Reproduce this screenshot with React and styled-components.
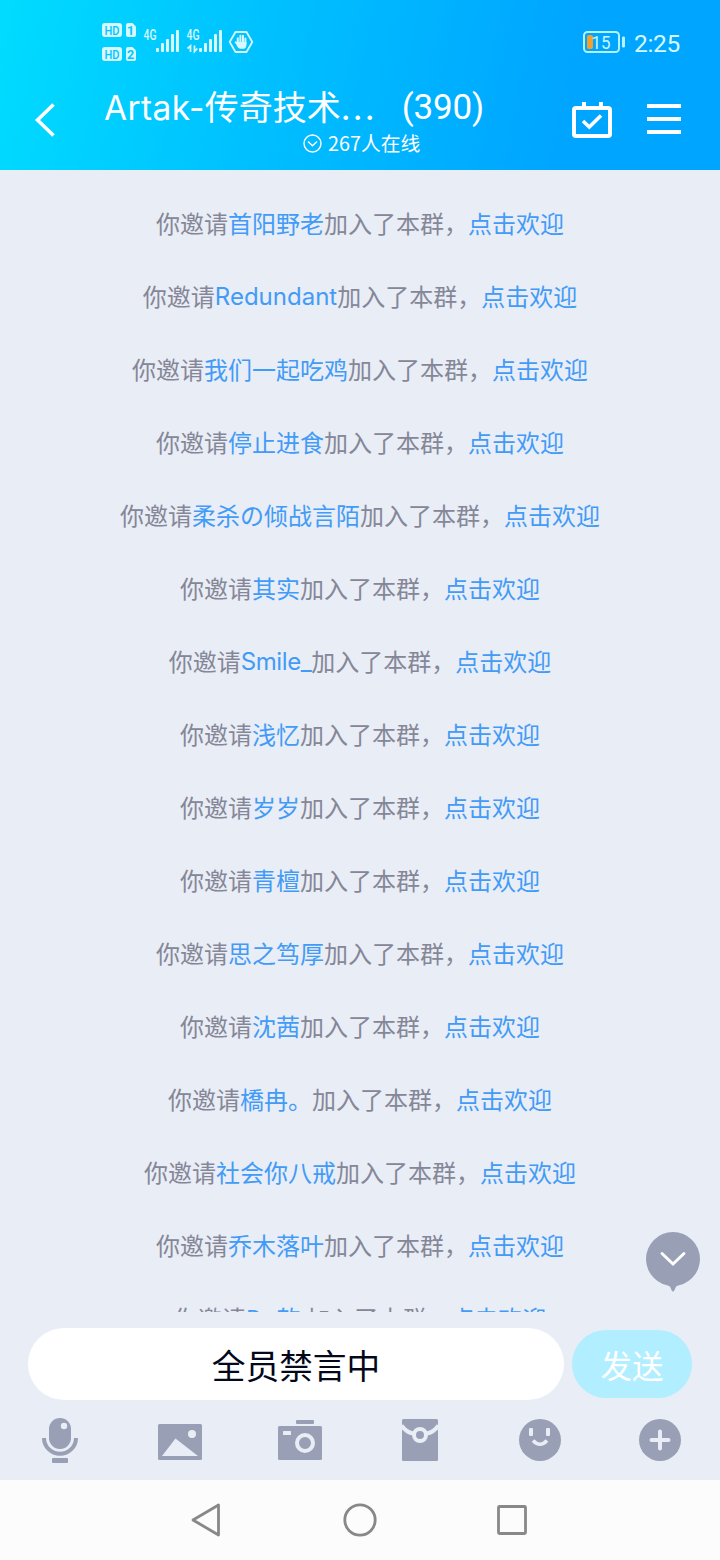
import React from "react";
import styled, { createGlobalStyle } from "styled-components";

const GlobalStyle = createGlobalStyle`
  * {
    box-sizing: border-box;
  }
  body {
    margin: 0;
    font-family: "Noto Sans CJK SC", sans-serif;
  }
`;

const Screen = styled.div`
  width: 720px;
  height: 1560px;
  display: flex;
  flex-direction: column;
  overflow: hidden;
  background-color: #e9edf5;
`;
const Header = styled.div`
  height: 170px;
  flex: none;
  color: white;
  background: linear-gradient(102deg, #00dcff 0%, #00bfff 38%, #00a5ff 78%, #00a5ff 100%);
`;
const StatusBar = styled.div`
  height: 84px;
  padding: 0 40px 0 102px;
  display: flex;
  align-items: center;
  justify-content: space-between;
  color: #d6f8ff;
`;
const StatusGroup = styled.div`
  display: flex;
  align-items: center;
`;
const Clock = styled.span`
  width: 46px;
  margin: 3px 0 0 8px;
  font-family: Roboto, sans-serif;
  font-size: 24.5px;
  letter-spacing: -0.3px;
  line-height: 28px;
  white-space: nowrap;
`;
const Svg = styled.svg`
  display: block;
  flex: none;
  overflow: visible;
`;
const SvgText = styled.text`
  font-family: Roboto, sans-serif;
  font-size: ${(props) => props.$size}px;
  font-weight: ${(props) => props.$weight || 400};
`;
const TitleBar = styled.div`
  height: 86px;
  padding: 0 39px 0 34px;
  display: flex;
  align-items: flex-start;
`;
const BackIcon = styled(Svg)`
  margin-top: 18px;
`;
const TitleBlock = styled.div`
  width: 380px;
  margin-left: 48px;
`;
const TitleLine = styled.div`
  display: flex;
  height: 46px;
  font-size: 34px;
  line-height: 44px;
  white-space: nowrap;
`;
const GroupName = styled.span`
  width: 299px;
`;
const Latin = styled.span`
  font-family: ${(props) => props.$font || "Inter"}, sans-serif;
  font-size: ${(props) => props.$size || "inherit"};
  letter-spacing: ${(props) => props.$spacing || 0}px;
`;
const MemberCount = styled(Latin)`
  padding-top: 2px;
`;
const OnlineLine = styled.div`
  height: 28px;
  margin: -1px 0 0 199px;
  display: flex;
  align-items: center;
  gap: 6px;
  font-size: 19.8px;
  line-height: 28px;
  white-space: nowrap;
`;
const HeaderActions = styled.div`
  display: flex;
  gap: 35px;
  margin: 17px 0 0 auto;
`;
const MessageList = styled.div`
  height: 1142px;
  flex: none;
  padding-top: 16px;
  overflow: hidden;
`;
const NoticeRow = styled.div`
  height: 73px;
  display: flex;
  align-items: center;
  justify-content: center;
  color: #858798;
  font-size: 24px;
  line-height: 36px;
  white-space: pre;
`;
const NoticeLink = styled.span`
  color: #429bf7;
`;
const Composer = styled.div`
  height: 168px;
  flex: none;
  position: relative;
`;
const InputRow = styled.div`
  display: flex;
  align-items: center;
  gap: 8px;
  padding: 16px 28px 0;
`;
const MutedInput = styled.div`
  width: 536px;
  height: 72px;
  border-radius: 36px;
  background-color: white;
  color: #03081a;
  font-size: 33.7px;
  line-height: 73px;
  text-align: center;
`;
const SendButton = styled.div`
  width: 120px;
  height: 68px;
  border-radius: 34px;
  background-color: #b1eeff;
  color: white;
  font-size: 31.5px;
  line-height: 68px;
  text-align: center;
`;
const ToolRow = styled.div`
  display: grid;
  grid-template-columns: repeat(6, 120px);
  justify-items: center;
  padding-top: 16px;
`;
const ScrollDown = styled.div`
  position: absolute;
  right: 20px;
  top: -80px;
`;
const NavBar = styled.div`
  height: 80px;
  flex: none;
  display: flex;
  align-items: center;
  justify-content: center;
  gap: 112px;
  background-color: #fcfcfc;
`;

const GRAY = "#999fb5";
const PAPER = "#e9edf5";

const NAMES = [
  { name: "首阳野老" },
  { name: "Redundant", latin: true },
  { name: "我们一起吃鸡" },
  { name: "停止进食" },
  { name: "柔杀の倾战言陌" },
  { name: "其实" },
  { name: "Smile_", latin: true, spacing: -0.4 },
  { name: "浅忆" },
  { name: "岁岁" },
  { name: "青檀" },
  { name: "思之笃厚" },
  { name: "沈茜" },
  { name: "橋冉。" },
  { name: "社会你八戒" },
  { name: "乔木落叶" },
  { name: "Dr.软 " },
];

const Notice = ({ name, latin, spacing }) => (
  <NoticeRow>
    <span>你邀请</span>
    <NoticeLink>{latin ? <Latin $spacing={spacing}>{name}</Latin> : name}</NoticeLink>
    <span>加入了本群，</span>
    <NoticeLink>点击欢迎</NoticeLink>
  </NoticeRow>
);

const SignalIcons = () => (
  <Svg width="152" height="40" viewBox="102 22 152 40" fill="#d6f8ff">
    <rect x="102" y="23" width="20" height="14" rx="3" />
    <rect x="102" y="47" width="20" height="14" rx="3" />
    <path d="M128 23h4.500l3.500 3.500v8.500a2 2 0 0 1-2 2h-6a2 2 0 0 1-2-2v-10a2 2 0 0 1 2-2z" />
    <path d="M128 47h4.500l3.500 3.500v8.500a2 2 0 0 1-2 2h-6a2 2 0 0 1-2-2v-10a2 2 0 0 1 2-2z" />
    <g fill="#00c6ff" textAnchor="middle">
      <SvgText $size={13} $weight={500} x="112" y="34.700" textLength="15" lengthAdjust="spacingAndGlyphs">HD</SvgText>
      <SvgText $size={13} $weight={500} x="112" y="58.700" textLength="15" lengthAdjust="spacingAndGlyphs">HD</SvgText>
      <SvgText $size={12.5} $weight={700} x="130.500" y="34.700">1</SvgText>
      <SvgText $size={12.5} $weight={700} x="130.500" y="58.700">2</SvgText>
    </g>
    <SvgText $size={14.5} $weight={500} x="143.500" y="40" textLength="13" lengthAdjust="spacingAndGlyphs">4G</SvgText>
    <SvgText $size={14.5} $weight={500} x="186.500" y="40" textLength="13" lengthAdjust="spacingAndGlyphs">4G</SvgText>
    {[156, 199].map((x) => (
      <g key={x}>
        <rect x={x} y="48" width="3" height="4" rx="1" />
        <rect x={x + 5} y="43" width="3" height="9" rx="1" />
        <rect x={x + 10} y="39" width="3" height="13" rx="1" />
        <rect x={x + 15} y="34" width="3" height="18" rx="1" />
        <rect x={x + 20} y="30" width="3" height="22" rx="1" />
      </g>
    ))}
    <path d="M187.500 48.500l3-2.500v6M194.500 45.500v6l2.800-3" fill="none" stroke="#d6f8ff" strokeWidth="1.800" />
    <path d="M235.500 32h11l5.800 10-5.800 10h-11l-5.800-10z" fill="none" stroke="#d6f8ff" strokeWidth="1.800" strokeLinejoin="round" />
    <path
      d="M237.800 44v-5.800M240.400 43v-7.300M243 43v-7.200M245.400 44v-5.600M235.800 42.300l3 3.500"
      fill="none"
      stroke="#d6f8ff"
      strokeWidth="2"
      strokeLinecap="round"
    />
    <path d="M236.800 42h9.600v3c0 2-1 3.800-3 3.800h-3c-1.500 0-2.400-1-3.600-3z" />
  </Svg>
);

const Battery = () => (
  <Svg width="43" height="24" viewBox="583 30 43 24">
    <rect x="584" y="32" width="35" height="20" rx="3.500" fill="none" stroke="#b3f2ff" strokeWidth="2" />
    <rect x="622" y="36.500" width="3" height="11" rx="1.200" fill="#b3f2ff" />
    <rect x="587" y="35" width="6" height="14" rx="2" fill="#f5a02c" />
    <SvgText $size={18.5} x="591.500" y="48.500" fill="#c9f6ff" textLength="19" lengthAdjust="spacingAndGlyphs">15</SvgText>
  </Svg>
);

const CalendarIcon = () => (
  <Svg width="40" height="38" viewBox="572 101 40 38" fill="none" stroke="white">
    <rect x="574" y="108" width="36" height="28" rx="2" strokeWidth="4" />
    <path d="M584 102v5M601 102v5" strokeWidth="4" />
    <path d="M583 121l6.300 6 11.700-11.500" strokeWidth="3.600" />
  </Svg>
);

const MenuIcon = () => (
  <Svg width="34" height="38" viewBox="647 101 34 38">
    <path d="M647 106h34M647 119h34M647 132h34" stroke="white" strokeWidth="4" />
  </Svg>
);

const MicIcon = () => (
  <Svg width="44" height="48" viewBox="38 1416 44 48" fill={GRAY}>
    <rect x="49" y="1418" width="22" height="31" rx="11" />
    <circle cx="64" cy="1426" r="3.200" fill={PAPER} />
    <path d="M44 1438a16 15.800 0 0 0 32 0" fill="none" stroke={GRAY} strokeWidth="4" />
    <rect x="52" y="1458" width="16" height="5" rx="1" />
  </Svg>
);

const ImageIcon = () => (
  <Svg width="44" height="48" viewBox="158 1416 44 48" fill={GRAY}>
    <rect x="158" y="1424" width="44" height="36" rx="1.500" />
    <circle cx="192" cy="1434" r="4" fill={PAPER} />
    <path d="M162 1456l13.500-17.500 22.500 17.500z" fill={PAPER} />
  </Svg>
);

const CameraIcon = () => (
  <Svg width="44" height="48" viewBox="278 1416 44 48" fill={GRAY}>
    <rect x="278" y="1426" width="44" height="34" rx="1.500" />
    <rect x="296" y="1420" width="18" height="4" rx="1" />
    <rect x="283" y="1431" width="8" height="4" rx="0.500" fill={PAPER} />
    <circle cx="305" cy="1443" r="8" fill="none" stroke={PAPER} strokeWidth="4" />
  </Svg>
);

const EnvelopeIcon = () => (
  <Svg width="44" height="48" viewBox="398 1416 44 48" fill={GRAY}>
    <rect x="402" y="1419" width="36" height="42" rx="1.500" />
    <path d="M401.500 1425.500Q406 1432 413 1433.500M438.500 1425.500Q434 1432 427 1433.500" fill="none" stroke={PAPER} strokeWidth="4" />
    <circle cx="420" cy="1435" r="6" stroke={PAPER} strokeWidth="4" />
  </Svg>
);

const SmileIcon = () => (
  <Svg width="44" height="48" viewBox="518 1416 44 48" fill={GRAY}>
    <circle cx="540" cy="1440" r="21" />
    <rect x="529" y="1428" width="4" height="8" rx="1" fill={PAPER} />
    <rect x="546" y="1428" width="4" height="8" rx="1" fill={PAPER} />
    <path d="M533 1440.500q7 7.500 14 0" fill="none" stroke={PAPER} strokeWidth="3.500" />
  </Svg>
);

const PlusIcon = () => (
  <Svg width="44" height="48" viewBox="638 1416 44 48">
    <circle cx="660" cy="1440" r="21" fill={GRAY} />
    <path d="M651.500 1440h17M660 1431.500v17" stroke={PAPER} strokeWidth="4" strokeLinecap="round" />
  </Svg>
);

const App = () => {
  return (
    <Screen>
      <GlobalStyle />
      <Header>
        <StatusBar>
          <SignalIcons />
          <StatusGroup>
            <Battery />
            <Clock>2:25</Clock>
          </StatusGroup>
        </StatusBar>
        <TitleBar>
          <BackIcon width="22" height="36" viewBox="34 102 22 36">
            <path d="M53.500 104.500l-16 15.500 16 15.500" fill="none" stroke="white" strokeWidth="3.600" />
          </BackIcon>
          <TitleBlock>
            <TitleLine>
              <GroupName>
                <Latin $size="33.5px" $spacing={0.4}>Artak-</Latin>传奇技术
                <Latin $size="34px" $spacing={2.2}>...</Latin>
              </GroupName>
              <MemberCount $font="Roboto" $size="35px" $spacing={-0.2}>(390)</MemberCount>
            </TitleLine>
            <OnlineLine>
              <Svg width="19" height="19" viewBox="0 0 19 19" fill="none" stroke="white" strokeWidth="1.400">
                <circle cx="9.500" cy="9.500" r="8.500" />
                <path d="M5 7.500l4.500 4.300L14 7.500" />
              </Svg>
              <span>267人在线</span>
            </OnlineLine>
          </TitleBlock>
          <HeaderActions>
            <CalendarIcon />
            <MenuIcon />
          </HeaderActions>
        </TitleBar>
      </Header>
      <MessageList>
        {NAMES.map((item) => (
          <Notice key={item.name} {...item} />
        ))}
      </MessageList>
      <Composer>
        <ScrollDown>
          <Svg width="54" height="60" viewBox="646 1232 54 60">
            <path d="M667 1284q3 2 4.500 6 1.500 3 3 0 1.500-4 4.500-6z" fill={GRAY} />
            <circle cx="673" cy="1259" r="27" fill={GRAY} />
            <path d="M662 1253.500l11 10.500 11-10.500" fill="none" stroke="white" strokeWidth="3" strokeLinecap="round" />
          </Svg>
        </ScrollDown>
        <InputRow>
          <MutedInput>全员禁言中</MutedInput>
          <SendButton>发送</SendButton>
        </InputRow>
        <ToolRow>
          <MicIcon />
          <ImageIcon />
          <CameraIcon />
          <EnvelopeIcon />
          <SmileIcon />
          <PlusIcon />
        </ToolRow>
      </Composer>
      <NavBar>
        <Svg width="40" height="40" viewBox="188 1500 40 40" fill="none" stroke="#888" strokeWidth="2.800" strokeLinejoin="round">
          <path d="M218.500 1505v30l-25.500-15z" />
        </Svg>
        <Svg width="40" height="40" viewBox="340 1500 40 40" fill="none" stroke="#888" strokeWidth="2.800">
          <circle cx="360" cy="1520" r="15.200" />
        </Svg>
        <Svg width="40" height="40" viewBox="492 1500 40 40" fill="none" stroke="#888" strokeWidth="2.800">
          <rect x="498.500" y="1506.500" width="27" height="27" rx="1" />
        </Svg>
      </NavBar>
    </Screen>
  );
};

export default App;
